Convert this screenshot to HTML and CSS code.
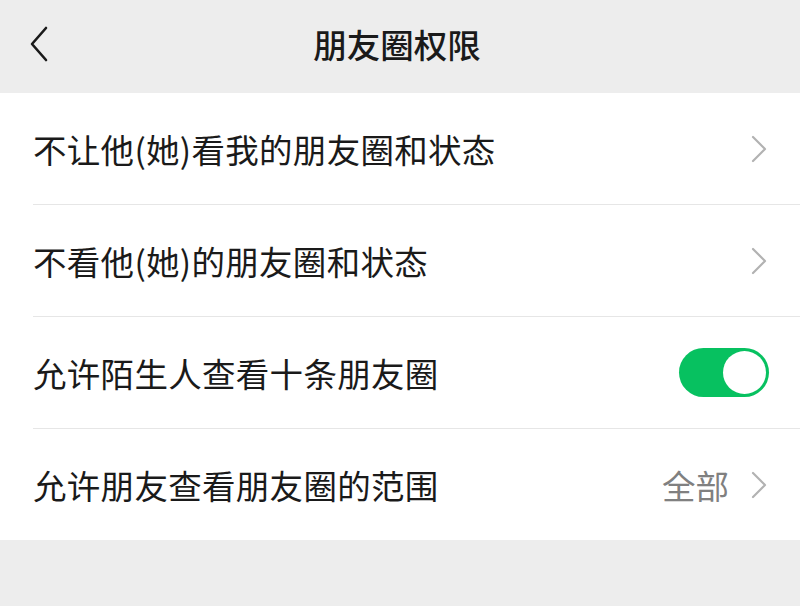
FILE: index.html
```html
<!DOCTYPE html>
<html lang="zh-CN">
<head>
<meta charset="utf-8">
<link rel="stylesheet" href="styles.css">
</head>
<body>
<div class="header">
  <div class="back">
    <svg width="20" height="36" viewBox="0 0 20 36"><path d="M17 2 L3 18 L17 34" fill="none" stroke="#1a1a1a" stroke-width="2.6" stroke-linecap="round" stroke-linejoin="round"/></svg>
  </div>
  <div class="title">朋友圈权限</div>
</div>
<div class="list">
  <div class="row">
    <div class="label">不让他(她)看我的朋友圈和状态</div>
    <div class="right"><svg class="chev" width="16" height="28" viewBox="0 0 16 28"><path d="M2 2 L14 14 L2 26" fill="none" stroke="#b2b2b2" stroke-width="2.2" stroke-linecap="round" stroke-linejoin="round"/></svg></div>
  </div>
  <div class="row">
    <div class="label">不看他(她)的朋友圈和状态</div>
    <div class="right"><svg class="chev" width="16" height="28" viewBox="0 0 16 28"><path d="M2 2 L14 14 L2 26" fill="none" stroke="#b2b2b2" stroke-width="2.2" stroke-linecap="round" stroke-linejoin="round"/></svg></div>
  </div>
  <div class="row">
    <div class="label">允许陌生人查看十条朋友圈</div>
    <div class="right"><div class="toggle"><div class="knob"></div></div></div>
  </div>
  <div class="row">
    <div class="label">允许朋友查看朋友圈的范围</div>
    <div class="right"><span class="value">全部</span><svg class="chev" width="16" height="28" viewBox="0 0 16 28"><path d="M2 2 L14 14 L2 26" fill="none" stroke="#b2b2b2" stroke-width="2.2" stroke-linecap="round" stroke-linejoin="round"/></svg></div>
  </div>
</div>
</body>
</html>
```
FILE: styles.css
```css
html, body {
  margin: 0;
  padding: 0;
  background: #ededed;
  font-family: "Noto Sans CJK SC", "Noto Sans", sans-serif;
  color: #1a1a1a;
}
.header {
  height: 93px;
  display: flex;
  align-items: center;
  justify-content: center;
  position: relative;
}
.back {
  position: absolute;
  left: 29px;
  top: 26px;
  width: 20px;
  height: 36px;
}
.back svg { display: block; }
.title {
  font-size: 33.5px;
  font-weight: 500;
  margin-top: -7px;
  margin-left: -6px;
}
.list {
  background: #fff;
}
.row {
  height: 111px;
  margin-left: 33px;
  padding-right: 33px;
  display: flex;
  align-items: center;
  justify-content: space-between;
  border-bottom: 1px solid #e6e6e6;
}
.row:last-child {
  border-bottom: none;
  height: 111px;
}
.label {
  font-size: 33.5px;
  letter-spacing: 0.3px;
}
.right {
  display: flex;
  align-items: center;
}
.chev { display: block; }
.value {
  font-size: 33.5px;
  color: #808080;
  margin-right: 22px;
}
.toggle {
  width: 90px;
  height: 49px;
  border-radius: 25px;
  background: #07c160;
  position: relative;
  margin-right: -2px;
}
.knob {
  position: absolute;
  right: 3px;
  top: 3px;
  width: 43px;
  height: 43px;
  border-radius: 50%;
  background: #fff;
}
```
